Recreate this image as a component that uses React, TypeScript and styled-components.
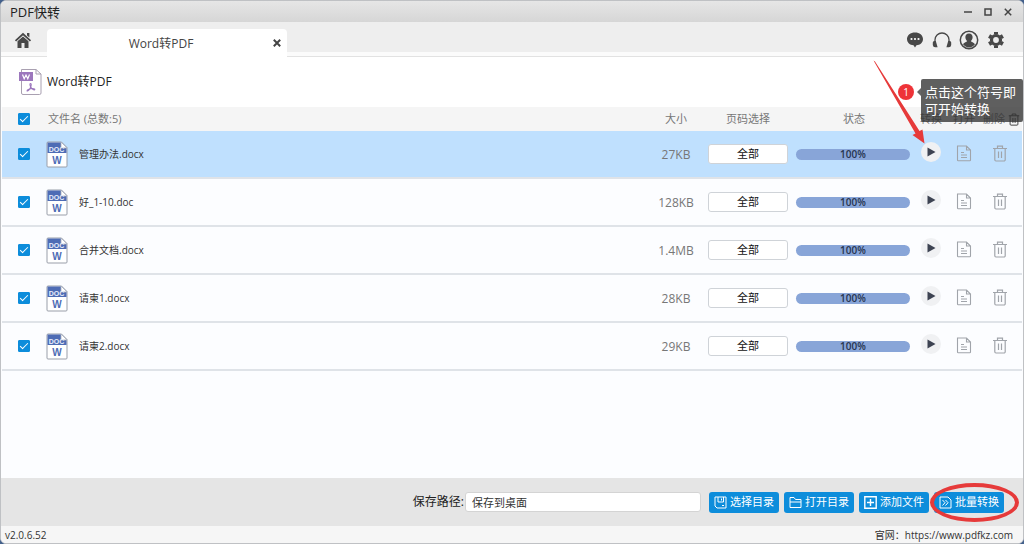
import React from "react";
import styled, { createGlobalStyle } from "styled-components";

const sans = `"Open Sans", "Noto Sans CJK SC", sans-serif`;

const GlobalStyle = createGlobalStyle`
  *, *::before, *::after { box-sizing: border-box; }
  body {
    margin: 0;
    background: #44618c;
    font-family: ${sans};
    font-size: 12px;
    line-height: 16px;
    color: #333;
  }
  button, input { font: inherit; color: inherit; }
`;

const Window = styled.div`
  position: relative;
  display: flex;
  flex-direction: column;
  min-height: 100vh;
  border: 1px solid #bfc1c4;
  border-radius: 6px;
  background: #fff;
  overflow: hidden;
`;

const TitleBar = styled.header`
  display: flex;
  align-items: center;
  justify-content: space-between;
  height: 21px;
  padding: 0 9px;
  background: linear-gradient(#e6e6e6, #d6d6d6);
`;

const AppName = styled.h1`
  margin: 0;
  font-size: 13px;
  font-weight: 400;
  line-height: 20px;
  color: #222;
`;

const WindowButtons = styled.div`
  display: flex;
  gap: 8px;
`;

const IconButton = styled.button<{ $size?: number }>`
  display: inline-flex;
  align-items: center;
  justify-content: center;
  width: ${(p) => p.$size ?? 12}px;
  height: ${(p) => p.$size ?? 12}px;
  padding: 0;
  border: 0;
  background: none;
  color: #484848;
  cursor: pointer;
  svg { display: block; flex: none; }
`;

const TabBar = styled.nav`
  display: flex;
  align-items: flex-end;
  height: 35px;
  padding: 0 17px 0 12px;
  background: linear-gradient(#eeeeee 0 30px, #fbfbfb 30px 34px, #e2e2e2 34px);
`;

const HomeSlot = styled.div`
  display: flex;
  flex: none;
  width: 34px;
  padding-bottom: 7px;
`;

const Tab = styled.div`
  display: grid;
  grid-template-columns: 12px 1fr 12px;
  align-items: center;
  width: 240px;
  height: 28px;
  padding: 0 4px;
  border-radius: 4px 4px 0 0;
  background: #fff;
`;

const TabLabel = styled.span`
  grid-column: 2;
  padding: 2px 12px 0 0;
  text-align: center;
  line-height: 18px;
  color: #444;
`;

const Tools = styled.div`
  display: flex;
  gap: 7px;
  margin-left: auto;
  padding-bottom: 7px;
`;

const PageHeading = styled.div`
  display: flex;
  align-items: center;
  gap: 5px;
  height: 50px;
  padding: 0 17px;
`;

const PageTitle = styled.h2`
  margin: 0;
  font-size: 12px;
  font-weight: 400;
  line-height: 18px;
  color: #222;
`;

const ListArea = styled.main`
  flex: 1;
  padding: 0 1px;
  background: #fcfdff;
`;

const FileTable = styled.table`
  width: 100%;
  table-layout: fixed;
  border-collapse: separate;
  border-spacing: 0;
`;

const Col = styled.col<{ $w?: number }>`
  width: ${(p) => (p.$w ? `${p.$w}px` : "auto")};
`;

const HeadCell = styled.th<{ $left?: boolean }>`
  height: 24px;
  padding: ${(p) => (p.$left ? "0 2px" : "0")};
  background: #f5f5f5;
  font-size: 11px;
  font-weight: 400;
  text-align: ${(p) => (p.$left ? "left" : "center")};
  white-space: nowrap;
  color: #777;
`;

const DeleteHead = styled.span`
  display: flex;
  align-items: center;
  justify-content: flex-end;
  gap: 3px;
  padding-right: 2px;
  svg { color: #333; }
`;

const Row = styled.tr<{ $selected?: boolean }>`
  background: ${(p) => (p.$selected ? "#bfe0fe" : "#fcfdff")};
`;

const Cell = styled.td<{ $left?: boolean }>`
  height: 48px;
  padding: 0;
  border-bottom: 2px solid #dfe3e8;
  text-align: ${(p) => (p.$left ? "left" : "center")};
  vertical-align: middle;
`;

const FileName = styled.div`
  display: flex;
  align-items: center;
  gap: 11px;
  font-size: 10px;
  color: #333;
`;

const SizeText = styled.span`
  display: block;
  padding-top: 2px;
  color: #777;
`;

const Check = styled.input`
  display: block;
  appearance: none;
  width: 12px;
  height: 12px;
  margin: 0 0 0 16px;
  border: 1px solid #0d8ddb;
  border-radius: 1px;
  background: #fff;
  &:checked {
    background: #0d8ddb;
  }
  &:checked::after {
    content: "";
    display: block;
    width: 8px;
    height: 4px;
    margin: 2px 1px;
    border: solid #fff;
    border-width: 0 0 1px 1px;
    transform: rotate(-45deg);
  }
`;

const RangeButton = styled.button`
  width: 80px;
  height: 20px;
  padding: 0;
  border: 1px solid #cfd3d8;
  border-radius: 3px;
  background: #fff;
  font-size: 11px;
  line-height: 16px;
  color: #111;
`;

const Progress = styled.div`
  height: 11px;
  margin-right: 2px;
  border-radius: 6px;
  background: #88a5d8;
  font-size: 10px;
  font-weight: 600;
  line-height: 11px;
  color: #26344f;
`;

const PlayButton = styled(IconButton)`
  border-radius: 50%;
  background: #f0f1f3;
  vertical-align: middle;
  margin-bottom: 4px;
`;

const RowAction = styled(IconButton)`
  color: #a0a4aa;
  vertical-align: middle;
  margin-bottom: 2px;
`;

const Footer = styled.footer`
  display: flex;
  align-items: center;
  justify-content: flex-end;
  height: 48px;
  padding: 0 19px;
  background: #e5e5e5;
`;

const PathLabel = styled.label`
  margin-right: 1px;
  font-size: 12px;
  color: #222;
`;

const PathInput = styled.input`
  width: 236px;
  height: 20px;
  margin-right: 8px;
  padding: 0 6px;
  border: 1px solid #d4d4d4;
  border-radius: 3px;
  background: #fff;
  font-size: 11px;
`;

const Actions = styled.div`
  display: flex;
  gap: 5px;
`;

const ActionButton = styled.button`
  position: relative;
  display: flex;
  align-items: center;
  justify-content: center;
  gap: 3px;
  width: 70px;
  height: 21px;
  padding: 0;
  border: 0;
  border-radius: 3px;
  background: #0d8ddb;
  font-size: 11px;
  line-height: 16px;
  white-space: nowrap;
  color: #fff;
  svg { flex: none; }
`;

const Ring = styled.span`
  position: absolute;
  inset: -9px -15px -9px -4px;
  border: 4px solid #e63a3a;
  border-radius: 50%;
  pointer-events: none;
`;

const StatusBar = styled.div`
  display: flex;
  align-items: center;
  justify-content: space-between;
  height: 17px;
  padding: 0 10px 0 4px;
  background: #f6f6f6;
  font-size: 10px;
  line-height: 16px;
  color: #333;
`;

const SiteLink = styled.a`
  color: inherit;
  text-decoration: none;
`;

const Arrow = styled.svg`
  position: absolute;
  top: 59px;
  right: 98px;
  pointer-events: none;
`;

const Tip = styled.div`
  position: absolute;
  top: 78px;
  right: 0;
  width: 102px;
  height: 43px;
  padding: 5px 4px;
  border-radius: 2px;
  background: rgba(50, 50, 50, 0.78);
  font-size: 13px;
  line-height: 17px;
  color: #fff;
  pointer-events: none;
  &::before {
    content: "";
    position: absolute;
    top: 9px;
    left: -4px;
    border: solid transparent;
    border-width: 4px 4px 4px 0;
    border-right-color: #666;
  }
`;

const StepBadge = styled.span`
  position: absolute;
  top: 5px;
  left: -23px;
  width: 16px;
  height: 16px;
  border-radius: 50%;
  background: #ee3338;
  font-size: 10px;
  line-height: 16px;
  text-align: center;
`;

const HomeIcon = () => (
  <svg width="18" height="17" viewBox="0 0 18 17" fill="#484848">
    <path d="M13 1h2.400v4.600L13 3.500z" />
    <path d="M1.500 8.800 9 2l7.500 6.800" fill="none" stroke="#484848" strokeWidth="1.800" />
    <path d="M3.500 9.300 9 4.500l5.500 4.800V16h-4v-5h-3v5h-4z" />
  </svg>
);

const CloseIcon = ({ size = 8, weight = 1.5 }: { size?: number; weight?: number }) => (
  <svg width={size} height={size} viewBox="0 0 8 8" stroke="#444" strokeWidth={weight}>
    <path d="m.8.8 6.400 6.400M7.200.8.8 7.200" />
  </svg>
);

const ChatIcon = () => (
  <svg width="18" height="18" viewBox="0 0 18 18">
    <path d="M9 1.500C4.500 1.500 1 4.200 1 8s3 5.900 6.500 6.300L9 16.500l1.500-2.200C14 13.900 17 11.800 17 8s-3.500-6.500-8-6.500z" fill="#484848" />
    <g fill="#fff"><circle cx="5.500" cy="8" r="1.100" /><circle cx="9" cy="8" r="1.100" /><circle cx="12.500" cy="8" r="1.100" /></g>
  </svg>
);

const HeadsetIcon = () => (
  <svg width="20" height="18" viewBox="0 0 20 18" fill="#484848">
    <path d="M3 11V8.800a7 6.800 0 0 1 14 0V11" fill="none" stroke="#484848" strokeWidth="1.300" />
    <path d="M.8 11.500A1.500 1.500 0 0 1 2.300 10h1.500l1.800 6.200H3.500A2.500 2.500 0 0 1 .8 14zM19.200 11.500a1.500 1.500 0 0 0-1.500-1.500h-1.500l-1.800 6.200h2.100a2.500 2.500 0 0 0 2.700-2.200z" />
  </svg>
);

const UserIcon = () => (
  <svg width="20" height="20" viewBox="0 0 20 20">
    <circle cx="10" cy="10" r="8.700" fill="none" stroke="#484848" strokeWidth="1.500" />
    <path d="M10 3.500c2.600 0 3.800 1.700 3.600 4-.2 1.700-.8 2.600-1.600 3.500.2 1.200 2.900 1.300 4 3.300A7.500 7.500 0 0 1 10 17.500a7.500 7.500 0 0 1-6-3.200c1.100-2 3.800-2.100 4-3.300-.8-.9-1.400-1.800-1.600-3.500-.2-2.300 1-4 3.600-4z" fill="#484848" />
  </svg>
);

const GearIcon = () => (
  <svg width="18" height="18" viewBox="0 0 18 18" fill="none" stroke="#484848">
    <circle cx="9" cy="9" r="4.500" strokeWidth="3.200" />
    {[0, 60, 120].map((a) => (
      <path key={a} d="M9 1v2.500M9 14.500V17" strokeWidth="4" transform={`rotate(${a} 9 9)`} />
    ))}
  </svg>
);

const WordPdfIcon = () => (
  <svg width="24" height="28" viewBox="0 0 24 28">
    <path d="M3.500 1.500H18l5 4.500v19a1.500 1.500 0 0 1-1.500 1.500H5A1.500 1.500 0 0 1 3.500 25z" fill="#fff" stroke="#a9a0b1" />
    <path d="M18 1.500V6h5" fill="none" stroke="#a9a0b1" />
    <rect x="1" y="4" width="14" height="9" fill="#9c77bd" />
    <path d="m4.500 6.500 1.700 4.200L8 7l1.800 3.700 1.700-4.200" fill="none" stroke="#fff" strokeWidth="1.200" />
    <path d="M12.300 15.500c1.400-.3 1.100 2.800-.2 4.900-1 1.700-2.800 3.200-3.100 2.400-.2-1 3.300-2.300 5.600-2.300 1.700 0 2.600.8 2 1.300-.8.500-2.800-1-3.700-2.600-.9-1.500-1.400-3.500-.6-3.700z" fill="none" stroke="#9c77bd" strokeWidth="1.100" />
  </svg>
);

const DocIcon = () => (
  <svg width="22" height="27" viewBox="0 0 22 27" fontFamily="Liberation Sans, sans-serif" fontWeight="700" textAnchor="middle">
    <path d="M2 1h13.500L21 6.500V25a1 1 0 0 1-1 1H2a1 1 0 0 1-1-1V2a1 1 0 0 1 1-1z" fill="#fff" stroke="#999ea9" />
    <path d="M1.500 1.500h14L20.500 7v5h-19z" fill="#4e6cb5" />
    <path d="M15 1v6h6z" fill="#fff" stroke="#a5acbb" strokeWidth=".8" />
    <text x="10.500" y="11" fontSize="7" fill="#e7edfb">DOC</text>
    <text x="11" y="22.500" fontSize="10" fill="#4e6cb5">W</text>
  </svg>
);

const PageIcon = () => (
  <svg width="16" height="17" viewBox="0 0 16 17" fill="none" stroke="currentColor" strokeWidth="1.100">
    <path d="M1.500 1h9l4 4v10a.8.800 0 0 1-.8.800H2.300a.8.800 0 0 1-.8-.8zM10.500 1v4h4M5 7.500h3M5 10h6M5 12.500h6" />
  </svg>
);

const TrashIcon = ({ width = 16, height = 17 }: { width?: number; height?: number }) => (
  <svg width={width} height={height} viewBox="0 0 16 17" fill="none" stroke="currentColor" strokeWidth="1.200">
    <path d="M1 3.500h14M5.500 3.200V1.200h5v2M2.800 3.500v11.300a1.200 1.200 0 0 0 1.200 1.200h8a1.200 1.200 0 0 0 1.200-1.200V3.500M6.500 6.500V13M9.500 6.500V13" />
  </svg>
);

const actionIcons = {
  save: <path d="M1 1h11v11H3L1 10zM4 1v5h5.500V1M7.500 2.500v2M8 9.500h2" />,
  folder: <path d="M1 11.500v-10h4L6.500 3.500H12v8zM1 6h11" />,
  add: <path d="M.8.8h11.400v11.400H.8zM6.500 3v7M3 6.500h7" strokeWidth="1.400" />,
  convert: <path d="M9 1H1v11h11V4zM3.500 4l2.500 2.700L3.500 9.500M6.500 4 9 6.700 6.500 9.500" />,
};

const ActionIcon = ({ name }: { name: keyof typeof actionIcons }) => (
  <svg width="13" height="13" viewBox="0 0 13 13" fill="none" stroke="#fff" strokeWidth="1">
    {actionIcons[name]}
  </svg>
);

const files = [
  { name: "管理办法.docx", size: "27KB" },
  { name: "好_1-10.doc", size: "128KB" },
  { name: "合并文档.docx", size: "1.4MB" },
  { name: "请柬1.docx", size: "28KB" },
  { name: "请柬2.docx", size: "29KB" },
];

export default function App() {
  return (
    <>
      <GlobalStyle />
      <Window>
        <TitleBar>
          <AppName>PDF快转</AppName>
          <WindowButtons>
            <IconButton aria-label="最小化">
              <svg width="8" height="8" viewBox="0 0 8 8" stroke="#444" strokeWidth="1.500"><path d="M0 4h8" /></svg>
            </IconButton>
            <IconButton aria-label="最大化">
              <svg width="8" height="8" viewBox="0 0 8 8" stroke="#444" strokeWidth="1.500" fill="none"><path d="M1 1h6v6H1z" /></svg>
            </IconButton>
            <IconButton aria-label="关闭"><CloseIcon /></IconButton>
          </WindowButtons>
        </TitleBar>

        <TabBar>
          <HomeSlot>
            <IconButton $size={20} aria-label="主页"><HomeIcon /></IconButton>
          </HomeSlot>
          <Tab>
            <TabLabel>Word转PDF</TabLabel>
            <IconButton aria-label="关闭标签"><CloseIcon weight={2} /></IconButton>
          </Tab>
          <Tools>
            <IconButton $size={20} aria-label="消息"><ChatIcon /></IconButton>
            <IconButton $size={20} aria-label="客服"><HeadsetIcon /></IconButton>
            <IconButton $size={20} aria-label="用户"><UserIcon /></IconButton>
            <IconButton $size={20} aria-label="设置"><GearIcon /></IconButton>
          </Tools>
        </TabBar>

        <PageHeading>
          <WordPdfIcon />
          <PageTitle>Word转PDF</PageTitle>
        </PageHeading>

        <ListArea>
          <FileTable>
            <colgroup>
              <Col $w={44} />
              <Col />
              <Col $w={48} />
              <Col $w={96} />
              <Col $w={116} />
              <Col $w={38} />
              <Col $w={28} />
              <Col $w={44} />
            </colgroup>
            <thead>
              <tr>
                <HeadCell><Check type="checkbox" defaultChecked aria-label="全选" /></HeadCell>
                <HeadCell $left>文件名 (总数:5)</HeadCell>
                <HeadCell>大小</HeadCell>
                <HeadCell>页码选择</HeadCell>
                <HeadCell>状态</HeadCell>
                <HeadCell>转换</HeadCell>
                <HeadCell>打开</HeadCell>
                <HeadCell>
                  <DeleteHead>删除<TrashIcon width={12} height={13} /></DeleteHead>
                </HeadCell>
              </tr>
            </thead>
            <tbody>
              {files.map((file, i) => (
                <Row key={file.name} $selected={i === 0}>
                  <Cell><Check type="checkbox" defaultChecked aria-label={file.name} /></Cell>
                  <Cell $left><FileName><DocIcon />{file.name}</FileName></Cell>
                  <Cell><SizeText>{file.size}</SizeText></Cell>
                  <Cell><RangeButton>全部</RangeButton></Cell>
                  <Cell>
                    <Progress role="progressbar" aria-valuenow={100} aria-label="状态">100%</Progress>
                  </Cell>
                  <Cell>
                    <PlayButton $size={20} aria-label="转换">
                      <svg width="10" height="10" viewBox="0 0 10 10" fill="#3d4352"><path d="M1.500.5 9.500 5l-8 4.500z" /></svg>
                    </PlayButton>
                  </Cell>
                  <Cell><RowAction $size={18} aria-label="打开"><PageIcon /></RowAction></Cell>
                  <Cell><RowAction $size={18} aria-label="删除"><TrashIcon /></RowAction></Cell>
                </Row>
              ))}
            </tbody>
          </FileTable>
        </ListArea>

        <Footer>
          <PathLabel htmlFor="save-path">保存路径:</PathLabel>
          <PathInput id="save-path" defaultValue="保存到桌面" />
          <Actions>
            <ActionButton><ActionIcon name="save" />选择目录</ActionButton>
            <ActionButton><ActionIcon name="folder" />打开目录</ActionButton>
            <ActionButton><ActionIcon name="add" />添加文件</ActionButton>
            <ActionButton><ActionIcon name="convert" />批量转换<Ring /></ActionButton>
          </Actions>
        </Footer>

        <StatusBar>
          <span>v2.0.6.52</span>
          <span>官网：<SiteLink href="https://www.pdfkz.com">https://www.pdfkz.com</SiteLink></span>
        </StatusBar>

        <Tip role="tooltip">
          <StepBadge>1</StepBadge>
          点击这个符号即可开始转换
        </Tip>
        <Arrow width="52" height="84" viewBox="0 0 52 84" fill="#e63a3a">
          <path d="M.5.5 2 1.500 46.500 71 49.500 69.500 51.500 83.500 39.500 75 42.500 73.500z" />
        </Arrow>
      </Window>
    </>
  );
}
